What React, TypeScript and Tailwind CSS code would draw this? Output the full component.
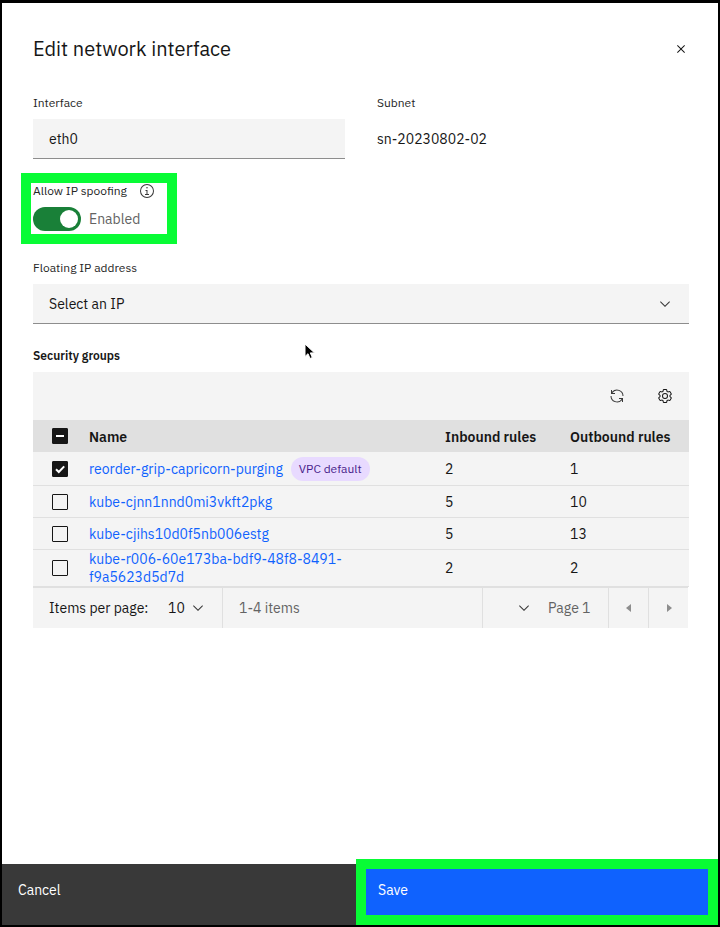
import { useState } from "react";
import type { ReactNode } from "react";

type IconProps = { className?: string };

function Icon({ className = "", children }: { className?: string; children: ReactNode }) {
  return (
    <svg viewBox="0 0 32 32" fill="currentColor" aria-hidden="true" className={`size-4 shrink-0 ${className}`}>
      {children}
    </svg>
  );
}

const CloseIcon = () => (
  <Icon>
    <path d="M17.414 16 24 9.414 22.586 8 16 14.586 9.414 8 8 9.414 14.586 16 8 22.586 9.414 24 16 17.414 22.586 24 24 22.586z" />
  </Icon>
);

const InfoIcon = ({ className }: IconProps) => (
  <Icon className={className}>
    <path d="M17 22v-8h-4v2h2v6h-3v2h8v-2zM16 8a1.5 1.5 0 1 0 1.5 1.5A1.5 1.5 0 0 0 16 8z" />
    <path d="M16 30a14 14 0 1 1 14-14 14 14 0 0 1-14 14zm0-26a12 12 0 1 0 12 12A12 12 0 0 0 16 4z" />
  </Icon>
);

const ChevronIcon = ({ className }: IconProps) => (
  <Icon className={className}>
    <path d="M16 22 6 12l1.4-1.4 8.6 8.6 8.6-8.6L26 12z" />
  </Icon>
);

const RenewIcon = () => (
  <Icon>
    <path d="M12 10H6.78A11 11 0 0 1 27 16h2A13 13 0 0 0 6 7.68V4H4v8h8zM20 22h5.22A11 11 0 0 1 5 16H3a13 13 0 0 0 23 8.32V28h2v-8h-8z" />
  </Icon>
);

const SettingsIcon = () => (
  <Icon>
    <path d="M27,16.76c0-.25,0-.5,0-.76s0-.51,0-.77l1.92-1.68A2,2,0,0,0,29.3,11L26.94,7a2,2,0,0,0-1.73-1,2,2,0,0,0-.64.1l-2.43.82a11.35,11.35,0,0,0-1.31-.75l-.51-2.52a2,2,0,0,0-2-1.61H13.64a2,2,0,0,0-2,1.61l-.51,2.52a11.48,11.48,0,0,0-1.32.75L7.43,6.06A2,2,0,0,0,6.79,6,2,2,0,0,0,5.06,7L2.7,11a2,2,0,0,0,.41,2.51L5,15.24c0,.25,0,.5,0,.76s0,.51,0,.77L3.11,18.45A2,2,0,0,0,2.7,21L5.06,25a2,2,0,0,0,1.73,1,2,2,0,0,0,.64-.1l2.43-.82a11.35,11.35,0,0,0,1.31.75l.51,2.52a2,2,0,0,0,2,1.61h4.72a2,2,0,0,0,2-1.61l.51-2.52a11.48,11.48,0,0,0,1.32-.75l2.42.82a2,2,0,0,0,.64.1,2,2,0,0,0,1.73-1L29.3,21a2,2,0,0,0-.41-2.51ZM25.21,24l-3.43-1.16a8.86,8.86,0,0,1-2.71,1.57L18.36,28H13.64l-.71-3.55a9.36,9.36,0,0,1-2.7-1.57L6.79,24,4.43,20l2.72-2.4a8.9,8.9,0,0,1,0-3.13L4.43,12,6.79,8l3.43,1.16a8.86,8.86,0,0,1,2.71-1.57L13.64,4h4.72l.71,3.55a9.36,9.36,0,0,1,2.7,1.57L25.21,8,27.57,12l-2.72,2.4a8.9,8.9,0,0,1,0,3.13L27.57,20Z" />
    <path d="M16,22a6,6,0,1,1,6-6A5.94,5.94,0,0,1,16,22Zm0-10a3.91,3.91,0,0,0-4,4,3.91,3.91,0,0,0,4,4,3.91,3.91,0,0,0,4-4A3.91,3.91,0,0,0,16,12Z" />
  </Icon>
);

function Checkbox({ label, checked, mixed = false, onChange }: { label: string; checked: boolean; mixed?: boolean; onChange: () => void }) {
  return (
    <span className="relative block size-4">
      <input
        type="checkbox"
        aria-label={label}
        checked={checked || mixed}
        onChange={onChange}
        className="block size-4 appearance-none rounded-[1px] border border-[#161616] checked:bg-[#161616]"
      />
      {mixed ? (
        <span className="pointer-events-none absolute inset-x-1 top-[7px] h-0.5 bg-white" />
      ) : checked ? (
        <svg viewBox="0 0 16 16" className="pointer-events-none absolute inset-0 size-4" fill="none" stroke="white" strokeWidth="2">
          <path d="M4 8.2 6.8 11 12.2 5.4" />
        </svg>
      ) : null}
    </span>
  );
}

const groups = [
  { name: "reorder-grip-capricorn-purging", tag: "VPC default", inbound: 2, outbound: 1, rowHeight: "h-[34px]" },
  { name: "kube-cjnn1nnd0mi3vkft2pkg", inbound: 5, outbound: 10, rowHeight: "h-8" },
  { name: "kube-cjihs10d0f5nb006estg", inbound: 5, outbound: 13, rowHeight: "h-8" },
  { name: "kube-r006-60e173ba-bdf9-48f8-8491-f9a5623d5d7d", inbound: 2, outbound: 2, rowHeight: "h-[37px]" },
];

const labelClass = "block text-xs leading-4 text-[#262626]";

export default function App() {
  const [selected, setSelected] = useState<string[]>([groups[0].name]);
  const [spoofing, setSpoofing] = useState(true);

  const toggle = (name: string) =>
    setSelected((s) => (s.includes(name) ? s.filter((n) => n !== name) : [...s, name]));
  const all = selected.length === groups.length;

  return (
    <main className="relative flex min-h-screen flex-col border-x-2 border-t-[3px] border-b-2 border-black bg-white font-['IBM_Plex_Sans',Roboto,sans-serif] text-sm text-[#161616]">
      <div className="flex flex-col pt-8 pr-[29px] pb-8 pl-[31px]">
        <header className="flex items-center justify-between">
          <h1 className="text-xl leading-7">Edit network interface</h1>
          <button type="button" aria-label="Close">
            <CloseIcon />
          </button>
        </header>

        <div className="mt-8 grid grid-cols-2 gap-8">
          <div>
            <label htmlFor="interface" className={labelClass}>Interface</label>
            <input
              id="interface"
              defaultValue="eth0"
              className="mt-2 block h-10 w-full border-b border-[#8d8d8d] bg-[#f4f4f4] px-4 outline-none"
            />
          </div>
          <div>
            <div className={labelClass}>Subnet</div>
            <div className="mt-2 leading-10">sn-20230802-02</div>
          </div>
        </div>

        <div className="relative mt-6 w-[132px]">
          <div className="flex items-center gap-3">
            <label htmlFor="spoofing" className={labelClass}>Allow IP spoofing</label>
            <InfoIcon className="text-[#393939]" />
          </div>
          <div className="mt-2 flex items-center gap-2">
            <span className="relative block h-6 w-12">
              <input
                id="spoofing"
                type="checkbox"
                role="switch"
                checked={spoofing}
                onChange={() => setSpoofing(!spoofing)}
                className="peer block h-6 w-12 appearance-none rounded-full bg-[#8d8d8d] checked:bg-[#198038]"
              />
              <span className="pointer-events-none absolute top-[3px] left-[3px] size-[18px] rounded-full bg-white peer-checked:left-[27px]" />
            </span>
            <span className="text-[#636363]">{spoofing ? "Enabled" : "Disabled"}</span>
          </div>
          <span className="pointer-events-none absolute -inset-x-3 -top-[10px] -bottom-[13px] border-[10px] border-[#08fc35]" />
        </div>

        <div className="mt-[29px]">
          <label htmlFor="floating-ip" className={labelClass}>Floating IP address</label>
          <div className="relative mt-2">
            <select
              id="floating-ip"
              className="block h-10 w-full appearance-none border-b border-[#8d8d8d] bg-[#f4f4f4] px-4 outline-none"
            >
              <option>Select an IP</option>
            </select>
            <ChevronIcon className="pointer-events-none absolute top-3 right-4 text-[#393939]" />
          </div>
        </div>

        <section className="mt-6">
          <h2 className="text-xs leading-4 font-semibold">Security groups</h2>
          <div className="mt-2 flex h-12 justify-end bg-[#f4f4f4]">
            <button type="button" aria-label="Refresh" className="grid size-12 place-items-center text-[#393939]">
              <RenewIcon />
            </button>
            <button type="button" aria-label="Settings" className="grid size-12 place-items-center">
              <SettingsIcon />
            </button>
          </div>

          <table className="w-full table-fixed border-separate border-spacing-0 text-left">
            <colgroup>
              <col className="w-14" />
              <col />
              <col className="w-[125px]" />
              <col className="w-[119px]" />
            </colgroup>
            <thead className="bg-[#e0e0e0]">
              <tr className="h-8">
                <th className="p-0 pl-[19px]">
                  <Checkbox
                    label="Select all rows"
                    checked={all}
                    mixed={!all && selected.length > 0}
                    onChange={() => setSelected(all ? [] : groups.map((g) => g.name))}
                  />
                </th>
                <th className="p-0 pt-0.5 font-semibold">Name</th>
                <th className="p-0 pt-0.5 font-semibold">Inbound rules</th>
                <th className="p-0 pt-0.5 font-semibold">Outbound rules</th>
              </tr>
            </thead>
            <tbody className="bg-[#f4f4f4] leading-[18px]">
              {groups.map((g) => (
                <tr key={g.name} className={g.rowHeight}>
                  <td className="border-b border-[#e0e0e0] p-0 pl-[19px]">
                    <Checkbox label={`Select ${g.name}`} checked={selected.includes(g.name)} onChange={() => toggle(g.name)} />
                  </td>
                  <td className="border-b border-[#e0e0e0] p-0 pr-12">
                    <div className="flex items-center gap-2">
                      <a href="#" className="text-[#0f62fe]">{g.name}</a>
                      {g.tag && (
                        <span className="shrink-0 rounded-full bg-[#e8daff] px-2 text-xs leading-6 text-[#491d8b]">{g.tag}</span>
                      )}
                    </div>
                  </td>
                  <td className="border-b border-[#e0e0e0] p-0">{g.inbound}</td>
                  <td className="border-b border-[#e0e0e0] p-0">{g.outbound}</td>
                </tr>
              ))}
            </tbody>
          </table>

          <nav aria-label="Pagination" className="mr-px flex h-[41px] border-t border-[#e0e0e0] bg-[#f4f4f4]">
            <div className="flex w-[190px] items-center justify-between border-r border-[#e0e0e0] pl-4">
              <label htmlFor="per-page">Items per page:</label>
              <div className="relative h-full w-[70px]">
                <select id="per-page" className="h-full w-full appearance-none bg-transparent pl-4 outline-none">
                  <option>10</option>
                </select>
                <ChevronIcon className="pointer-events-none absolute top-3 right-4 text-[#393939]" />
              </div>
            </div>
            <div className="flex grow items-center pl-4 text-[#636363]">1-4 items</div>
            <div className="flex w-[127px] items-center border-x border-[#e0e0e0] text-[#636363]">
              <div className="relative h-full w-[65px]">
                <select aria-label="Page number" className="h-full w-full appearance-none bg-transparent outline-none">
                  <option value="1"></option>
                </select>
                <ChevronIcon className="pointer-events-none absolute top-3 right-4 text-[#393939]" />
              </div>
              <span>Page 1</span>
            </div>
            <button type="button" aria-label="Previous page" disabled className="grid w-10 place-items-center border-r border-[#e0e0e0] text-[#8d8d8d]">
              <Icon><path d="M20 24 10 16 20 8z" /></Icon>
            </button>
            <button type="button" aria-label="Next page" disabled className="grid w-[39px] place-items-center text-[#8d8d8d]">
              <Icon><path d="M12 8 22 16 12 24z" /></Icon>
            </button>
          </nav>
        </section>
      </div>

      <footer className="mt-auto grid h-[61px] grid-cols-2 text-white">
        <button type="button" className="flex bg-[#393939] px-4 pt-4 text-left">Cancel</button>
        <div className="relative grid">
          <button type="button" className="flex bg-[#0f62fe] px-[18px] pt-4 text-left">Save</button>
          <span className="pointer-events-none absolute -top-[5px] right-0 bottom-0 -left-1 border-[10px] border-[#08fc35]" />
        </div>
      </footer>

      <svg viewBox="0 0 12 18" aria-hidden="true" className="pointer-events-none absolute top-[340px] left-[302px] h-[18px] w-3">
        <path d="M1 1v12.5l3-2.8 2 4.8 2.3-1-2-4.6h4.2z" fill="black" stroke="white" strokeWidth="1" />
      </svg>
    </main>
  );
}
